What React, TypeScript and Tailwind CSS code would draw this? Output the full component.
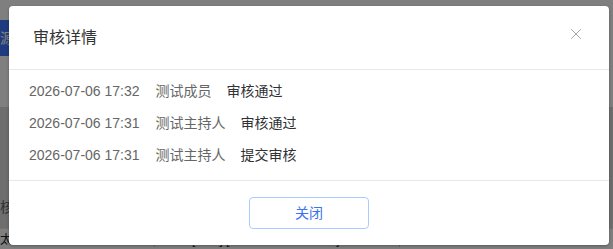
import { X } from 'lucide-react';

const logs = [
  { time: '2026-07-06 17:32', user: '测试成员', action: '审核通过' },
  { time: '2026-07-06 17:31', user: '测试主持人', action: '审核通过' },
  { time: '2026-07-06 17:31', user: '测试主持人', action: '提交审核' },
];

const font = { fontFamily: '"Liberation Sans", "Noto Sans CJK SC", sans-serif' };

function PageBehind() {
  return (
    <div className="w-[613px] h-[249px] bg-white flex flex-col text-[14px] text-[#303133]">
      <div className="h-[20px]" />
      <div className="h-[36px] flex">
        <div className="w-[20px] bg-[#3e74ff] text-white flex items-center pl-[0px]">源</div>
      </div>
      <div className="h-[51px]" />
      <div className="h-[121px] bg-[#dcdcdc] flex items-end pb-[10px] text-[#606266]">
        <span>核</span>
      </div>
      <div className="flex-1 flex items-start pt-[4px] border-t border-[#e5e5e5] text-[#222] text-[12px] leading-[14px]">
        <span className="w-[155px] border-r border-[#ccc] whitespace-nowrap overflow-hidden">太之以3/0/0 0/1 x</span>
        <span className="w-[245px] pl-[37px] border-r border-[#ccc] whitespace-nowrap overflow-hidden">[公日] [星》删除 · 招终签署]</span>
        <span className="pl-[30px] whitespace-nowrap overflow-hidden">段分测试 x15x</span>
      </div>
    </div>
  );
}

export default function App() {
  return (
    <div className="relative w-[613px] h-[249px] overflow-hidden" style={font}>
      <PageBehind />
      <div className="absolute inset-0 bg-black/50" />
      <div className="absolute left-[9px] top-[6px] w-[600px] h-[239px] bg-white rounded-[4px] shadow-[0_1px_3px_rgba(0,0,0,0.3)] flex flex-col">
        <div className="h-[64px] flex items-center justify-between pl-[24px] pr-[24px] border-b border-[#e8e8e8]">
          <span className="text-[16px] text-[#333] leading-[24px] font-normal">审核详情</span>
          <X size={18} strokeWidth={1.1} className="text-[#909399] -mt-[8px]" />
        </div>
        <div className="pt-[5px] pb-[9px] flex flex-col border-b border-[#e8e8e8]">
          {logs.map((log, i) => (
            <div key={i} className="h-[32px] flex items-center pl-[20px] text-[14px]">
              <span className="text-[#666] mr-[16px]">{log.time}</span>
              <span className="text-[#666] mr-[15px]">{log.user}</span>
              <span className="text-[#303133]">{log.action}</span>
            </div>
          ))}
        </div>
        <div className="flex-1 flex justify-center pt-[16px]">
          <button className="w-[120px] h-[32px] rounded-[4px] border border-[#a8ccff] bg-white text-[14px] text-[#3a72f0]">
            关闭
          </button>
        </div>
      </div>
    </div>
  );
}
